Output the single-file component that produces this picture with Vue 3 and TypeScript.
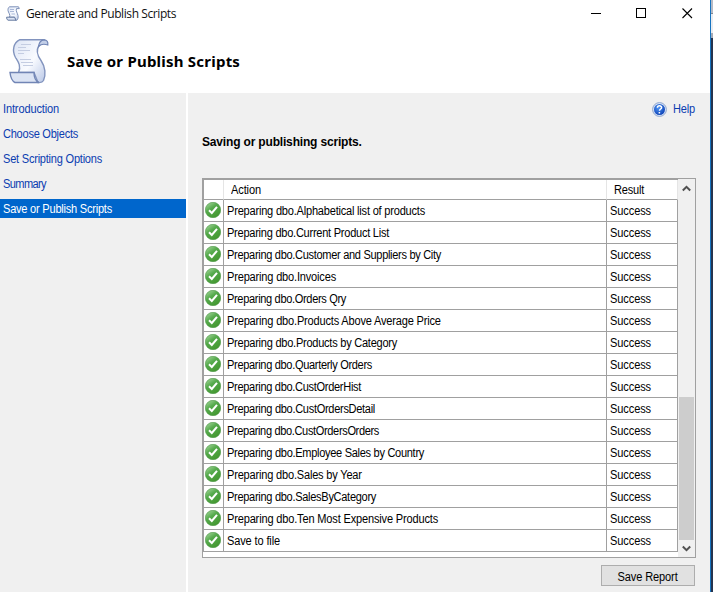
<script setup lang="ts">
interface Item {
  label: string
  width: number
}

const steps: Item[] = [
  { label: 'Introduction', width: 56 },
  { label: 'Choose Objects', width: 75 },
  { label: 'Set Scripting Options', width: 99 },
  { label: 'Summary', width: 43 },
  { label: 'Save or Publish Scripts', width: 109 },
]
const activeStep = 4

const actions: Item[] = [
  { label: 'Preparing dbo.Alphabetical list of products', width: 198 },
  { label: 'Preparing dbo.Current Product List', width: 162 },
  { label: 'Preparing dbo.Customer and Suppliers by City', width: 214 },
  { label: 'Preparing dbo.Invoices', width: 109 },
  { label: 'Preparing dbo.Orders Qry', width: 119 },
  { label: 'Preparing dbo.Products Above Average Price', width: 215 },
  { label: 'Preparing dbo.Products by Category', width: 170 },
  { label: 'Preparing dbo.Quarterly Orders', width: 145 },
  { label: 'Preparing dbo.CustOrderHist', width: 134 },
  { label: 'Preparing dbo.CustOrdersDetail', width: 148 },
  { label: 'Preparing dbo.CustOrdersOrders', width: 152 },
  { label: 'Preparing dbo.Employee Sales by Country', width: 197 },
  { label: 'Preparing dbo.Sales by Year', width: 135 },
  { label: 'Preparing dbo.SalesByCategory', width: 149 },
  { label: 'Preparing dbo.Ten Most Expensive Products', width: 211 },
  { label: 'Save to file', width: 53 },
]

const CONDENSE = 0.92
const ctx = document.createElement('canvas').getContext('2d')!

// Tracking that makes a condensed label occupy its measure at the UI font size.
function tracking(item: Item): { letterSpacing: string } {
  ctx.font = '12px "Liberation Sans"'
  const gap = (item.width / CONDENSE - ctx.measureText(item.label).width) / item.label.length
  return { letterSpacing: `${gap.toFixed(3)}px` }
}
</script>

<template>
  <div class="screen">
    <svg width="0" height="0" class="defs">
      <defs>
        <linearGradient id="paper" x1="0" y1="0" x2="1" y2="1">
          <stop offset="0" stop-color="#dce4f5" />
          <stop offset=".55" stop-color="#f9fbff" />
          <stop offset="1" stop-color="#b9c7e6" />
        </linearGradient>
        <linearGradient id="green" x1="0" y1="0" x2=".7" y2="1">
          <stop offset="0" stop-color="#b4deaa" />
          <stop offset=".45" stop-color="#55aa4c" />
          <stop offset="1" stop-color="#43972f" />
        </linearGradient>
        <radialGradient id="blue" cx=".4" cy=".35" r=".7">
          <stop offset="0" stop-color="#4e94f2" />
          <stop offset="1" stop-color="#0b3fb5" />
        </radialGradient>
      </defs>
    </svg>

    <div class="window">
      <header class="titlebar">
        <svg class="small-scroll" viewBox="0 0 14 15">
          <path d="M3.500 .8H12.500L13.300 2.600H10.500C9.500 5 11.500 7 12 9.500C12.300 11.500 12 13 11 14.200H9.500L8.500 11.200H3.500C4.800 9 2.200 6.500 2 4.500C1.900 2.800 2.300 1.500 3.500 .8Z" fill="url(#paper)" stroke="#7d90b8" />
          <path d="M.6 11.200H8.500L10 14.200H2C1 13.700 .6 12.500 .6 11.200Z" fill="#dce4f4" stroke="#65799f" />
          <path d="M4 3.500H8M4 5.500H8M5.500 8H9" stroke="#a9b8d8" />
        </svg>
        <span class="caption">Generate and Publish Scripts</span>
        <svg class="controls" width="103" height="12" viewBox="0 0 103 12" fill="none" stroke="#000">
          <path d="M0 6.500H10" />
          <rect x="45.500" y="1.500" width="9" height="9" />
          <path d="M91.500 1.500L101 11M101 1.500L91.500 11" stroke-width="1.100" />
        </svg>
      </header>
      <div class="banner">
        <svg class="big-scroll" viewBox="0 0 40 46">
          <path d="M10.500 1.800H35L30 7.500C26.500 13 29 18.500 32 22.500C36.500 29 37 37 34.500 42.500C33.500 44.500 31.500 44.800 29 44.500L25 34.500H9.500C12.500 28 9 23.500 6.500 19.500C2.800 13 4.500 4.500 10.500 1.800Z" fill="url(#paper)" stroke="#8294be" stroke-width="1.400" />
          <path d="M29.500 8.500C30 4.500 32 2 35 1.800C38 1.800 39.300 4 38.800 7C35.500 5.800 32 6 29.500 8.500Z" fill="#c3cfe8" stroke="#7185b5" stroke-width="1.200" />
          <path d="M1 34.500H25C25 39 26 43 30 44.500H6C3 43 1.500 39 1 34.500Z" fill="#dce4f4" stroke="#7185b5" stroke-width="1.400" />
          <path d="M12 6.500H22M9 9.500H17M9 12.500H21M9 15.500H15M11 21.500H22M12 24.500H24M14 27.500H24" stroke="#c4cde2" stroke-width="1.200" />
        </svg>
        <h1>Save or Publish Scripts</h1>
      </div>
      <div class="body">
        <nav>
          <a v-for="(step, i) in steps" :key="step.label" :class="{ active: i === activeStep }">
            <span class="label" :style="tracking(step)">{{ step.label }}</span>
          </a>
        </nav>
        <main>
          <div class="help">
            <svg width="15" height="15" viewBox="0 0 15 15">
              <circle cx="7.500" cy="7.500" r="6.900" fill="#dce6f6" stroke="#8da5cf" />
              <circle cx="7.500" cy="7.500" r="5.500" fill="url(#blue)" />
              <path d="M5.400 5.800C5.400 3.200 9.800 3.300 9.600 5.600C9.500 7 7.600 7 7.500 8.700M7.400 10.100V11.600" fill="none" stroke="#fff" stroke-width="1.500" />
            </svg>
            <span class="label" :style="tracking({ label: 'Help', width: 22 })">Help</span>
          </div>
          <h2>Saving or publishing scripts.</h2>
          <div class="list">
            <div class="grid">
              <div class="row head">
                <div class="cell"></div>
                <div class="cell"><span class="label" :style="tracking({ label: 'Action', width: 30 })">Action</span></div>
                <div class="cell"><span class="label" :style="tracking({ label: 'Result', width: 30 })">Result</span></div>
              </div>
              <div v-for="item in actions" :key="item.label" class="row">
                <div class="cell icon">
                  <svg width="16" height="16" viewBox="0 0 16 16">
                    <circle cx="8" cy="8" r="7.700" fill="url(#green)" stroke="#4a9644" stroke-width=".6" />
                    <path d="M4 8.300L6.800 11L12 4.800" fill="none" stroke="#fff" stroke-width="2" />
                  </svg>
                </div>
                <div class="cell"><span class="label" :style="tracking(item)">{{ item.label }}</span></div>
                <div class="cell"><span class="label" :style="tracking({ label: 'Success', width: 41 })">Success</span></div>
              </div>
            </div>
            <div class="scrollbar">
              <svg width="9" height="7" viewBox="0 0 9 7"><path d="M.8 5.500L4.500 1.800L8.200 5.500" /></svg>
              <div class="thumb"></div>
              <svg width="9" height="7" viewBox="0 0 9 7"><path d="M.8 1.500L4.500 5.200L8.200 1.500" /></svg>
            </div>
          </div>
          <button type="button"><span class="label centered" :style="tracking({ label: 'Save Report', width: 60 })">Save Report</span></button>
        </main>
      </div>
    </div>
    <div class="edge"></div>
    <div class="behind">
      <div class="b1"></div>
      <div class="b2"></div>
      <div class="b3"></div>
    </div>
  </div>
</template>

<style>
body { margin: 0; overflow: hidden; }
</style>

<style scoped>
.screen {
  display: flex;
  width: 713px;
  height: 592px;
  overflow: hidden;
  background: #fff;
  color: #000;
  font: 12px/14px "Liberation Sans", sans-serif;
  white-space: nowrap;
}
.defs { position: absolute; }
.label { display: inline-block; transform: scaleX(0.92); transform-origin: left center; }
.label.centered { transform-origin: center; }
.help .label { transform-origin: right center; }
.window { width: 710px; flex: none; display: flex; flex-direction: column; }
.titlebar { height: 28px; display: flex; align-items: center; padding: 0 16px 0 6px; box-sizing: border-box; }
.small-scroll { width: 14px; height: 15px; margin-top: -1px; }
.caption { margin-left: 6px; font: 12px/16px "Open Sans", sans-serif; letter-spacing: -0.41px; color: #111; }
.controls { margin-left: auto; margin-top: -2px; }
.banner { height: 65px; display: flex; align-items: center; padding-left: 9px; box-sizing: border-box; }
.big-scroll { width: 40px; height: 46px; margin-top: 1px; }
h1 { margin: 0 0 0 18px; font: bold 15px/20px "Noto Sans", sans-serif; letter-spacing: 0.22px; }
.body { flex: 1; display: flex; gap: 2px; }
nav { width: 186px; background: #f0f0f0; padding-top: 6px; box-sizing: border-box; display: flex; flex-direction: column; gap: 6px; color: #0b3db0; }
nav a { height: 19px; line-height: 21px; padding-left: 3px; }
nav a.active { background: #0066cc; color: #fff; }
main { width: 522px; padding: 8px 15px 0 14px; box-sizing: border-box; background: #f0f0f0; display: flex; flex-direction: column; }
.help { height: 16px; display: flex; align-items: center; justify-content: flex-end; gap: 4px; color: #0b3db0; }
h2 { margin: 17px 0 0; font: bold 12px/16px "Liberation Sans", sans-serif; letter-spacing: -0.17px; }
.list { margin-top: 28px; height: 380px; width: 494px; box-sizing: border-box; border: 1px solid #a0a0a0; background: #fff; display: flex; }
.grid { width: 475px; box-sizing: border-box; border-left: 1px solid #a0a0a0; border-top: 1px solid #a0a0a0; height: 373px; }
.row { display: grid; grid-template: 22px / 20px 383px 71px; }
.row.head { grid-template-rows: 20px; }
.cell { border-right: 1px solid #a0a0a0; border-bottom: 1px solid #a0a0a0; padding-left: 3px; line-height: 22px; box-sizing: border-box; min-width: 0; height: 100%; }
.head .cell { border-right-color: #e5e5e5; padding-left: 7px; line-height: 20px; }
.cell.icon { padding: 2px 0 0 1px; }
.icon svg { display: block; }
.scrollbar { width: 17px; background: #f0f0f0; display: flex; flex-direction: column; align-items: center; padding: 6px 0 5px; box-sizing: border-box; }
.scrollbar path { fill: none; stroke: #505050; stroke-width: 2; }
.scrollbar svg { display: block; }
.thumb { width: 15px; height: 143px; background: #cdcdcd; margin-top: auto; margin-bottom: 5px; }
button { align-self: flex-end; margin-top: 7px; width: 94px; height: 21px; flex: none; padding: 1px 0 0; border: 1px solid #adadad; background: #e1e1e1; color: #000; font: 12px/18px "Liberation Sans", sans-serif; }
button .label { line-height: 18px; padding-top: 1px; }
.edge { width: 1px; background: #1673c0; }
.behind { width: 2px; display: flex; flex-direction: column; }
.b1 { height: 14px; background: #b6bac5; border-bottom: 1px solid #808793; box-sizing: border-box; }
.b2 { height: 24px; background: #e9ebef; border-bottom: 5px solid #a4a9b5; box-sizing: border-box; }
.b3 { flex: 1; background: #26344e; }
</style>
